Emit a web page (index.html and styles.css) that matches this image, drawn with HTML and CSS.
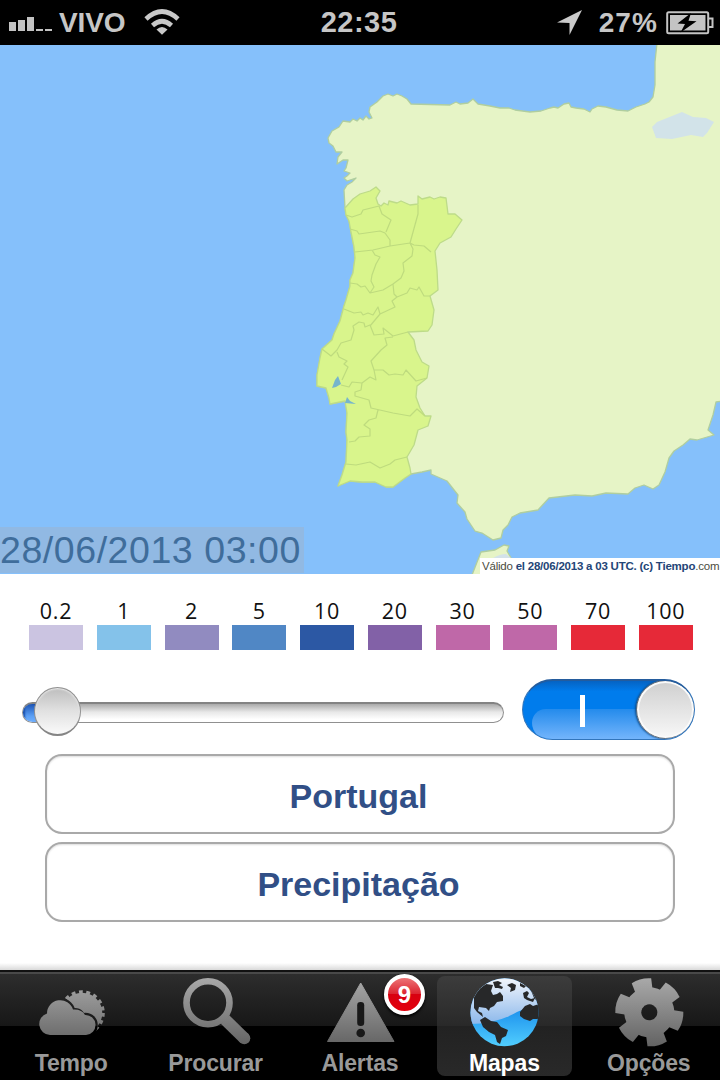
FILE: index.html
```html
<!DOCTYPE html>
<html lang="pt">
<head>
<meta charset="utf-8">
<title>Mapas</title>
<link rel="stylesheet" href="styles.css">
</head>
<body>
<div class="screen">
  <header class="status">
    <div class="status-left">
      <svg class="signal" width="45" height="16" viewBox="0 0 45 16"><path d="M0 6h7v9H0zM9 4h7v11H9zM18 1h7v14h-7zM27 13h7v2h-7zM36 13h7v2h-7z" fill="#c3c3c3"/></svg>
      <span class="carrier">VIVO</span>
      <svg class="wifi" width="36" height="28" viewBox="0 0 36 28" fill="none" stroke="#c9c9c9" stroke-width="4.6"><path d="M2 11Q18-4 34 11"/><path d="M8.500 17.500Q18 9 27.500 17.500"/><path d="M12.500 21.500Q18 16.500 23.500 21.500L18 26.800Z" fill="#c9c9c9" stroke="none"/></svg>
    </div>
    <div class="clock">22:35</div>
    <div class="status-right">
      <svg class="arrow" width="27" height="27" viewBox="0 0 27 27"><path d="M26 1L13.500 26V14L1 13.500Z" fill="#cacaca"/></svg>
      <span class="percent">27%</span>
      <svg class="battery" width="48" height="24" viewBox="0 0 48 24"><rect x="1.200" y="1.200" width="41" height="21" rx="1.500" fill="none" stroke="#c4c4c4" stroke-width="2"/><path d="M42.500 7.500h4v8.500h-4" fill="none" stroke="#c4c4c4" stroke-width="2"/><path d="M4 4h35.500v15.500H4z" fill="#c4c4c4"/><path d="M25 2L11.500 12.500L19 13L14.500 21.500L30.500 10.300L22.500 9.700Z" fill="#000"/></svg>
    </div>
  </header>

  <section class="map">
    <svg class="map-art" width="720" height="529" viewBox="0 45 720 529">
      <rect y="45" width="720" height="529" fill="#85c0fb"/>
      <path class="land" d="M657 43L655 62L655 85L653 97L649 102L645 104L636 107L628 111L617 110L606 107L598 106L592 109L590 112L584 109L576 108L571 107L569 103L564 104L558 108L554 107L550 108L541 111L530 112L515 110L509 108L500 108L490 106L478 104L473 99L468 103L460 104L456 102L450 105L411 104L407 99L402 96L397 94L393 96L388 94L383 96L377 102L370 107L369 112L372 118L369 119L366 116L363 120L360 118L357 121L353 119L350 122L343 121L339 127L332 131L328 138L329 143L333 146L336 152L342 152L338 157L337 164L343 160L348 160L346 168L344 171L350 173L347 176L344 178L347 181L356 178L352 182L347 185L344 190L345 208L346 215L349 221L351 232L354 247L355 258L353 273L350 280L350 286L346 300L344 306L340 321L334 334L332 340L322 349L320 358L317 375L317 386L326 388L329 398L330 404L345 401L347 413L346 432L347 440L346 462L342 475L338 486L350 481L362 482L375 482L386 487L393 487L405 478L411 474L422 472L431 470L431 474L447 481L458 495L457 503L465 512L467 519L475 531L482 533L493 540L501 538L503 530L508 525L512 517L520 513L538 510L549 498L575 495L592 496L606 493L628 494L635 488L644 485L653 489L659 485L665 472L669 458L674 451L683 445L690 439L697 440L714 435L708 430L713 415L716 402L722 401V43Z"/>
      <path class="land" d="M472 575L481 552L495 550L504 545L509 546L507 551L511 558V575Z"/>
      <path d="M493 558Q500 554 506 554L511 558Z" fill="#d3e2e9"/>
      <path d="M652 127L657 122L672 116L682 112L693 117L706 118L714 122L707 133L703 137L691 135L672 139L656 138Z" fill="#d2e3e9"/>
      <path class="portugal" d="M345 208L353 199L360 194L370 191L376 187L380 191L376 198L378 204L381 206L384 203L388 205L389 201L397 203L401 201L410 205L418 204L418 196L422 199L430 197L434 199L440 197L446 198L448 214L455 214L462 220L456 229L451 237L440 243L435 251L437 270L438 290L430 296L434 310L432 325L428 331L408 332L414 340L416 350L422 362L429 366L427 378L417 386L416 397L420 408L425 416L431 416L428 426L418 430L414 445L407 457L410 468L411 474L405 478L393 487L386 487L375 482L362 482L350 481L338 486L342 475L346 462L347 440L346 432L347 413L345 401L330 404L329 398L326 388L317 386L317 375L320 358L322 349L332 340L334 334L340 321L344 306L346 300L350 286L350 280L353 273L355 258L354 247L351 232L349 221L346 215Z"/>
      <path class="district" d="M346 215L352 217L361 214L363 210L379 206L382 214L391 220L386 232M350 229L357 231L359 234L380 231L385 233L390 240L390 246M355 252L373 250L390 246L410 243L414 245L424 246L431 252M418 205L418 214L410 243M372 250L375 255L380 257L376 264L372 275L371 281L374 287L370 293M410 243L413 249L412 256L403 263L404 271L401 278L393 284M350 283L357 284L361 287L365 286L370 293L383 290L393 284L394 294L397 297L407 293L410 288L417 290L419 287L424 296L430 296M397 297L392 301L395 307L380 314L370 326M344 309L354 313L361 312L363 315L368 313L373 315L378 307L380 314M322 349L331 356L337 350L341 343L351 340L354 330L353 326L359 322L364 323L365 327L370 325L374 335L384 334L383 328L393 336L408 332M337 352L339 357L347 361L344 364L348 367L342 380M393 337L385 338L387 345L381 350L371 361L374 370L383 370L389 375L395 374L403 375L406 370L416 381L427 378M374 370L376 380L370 377L362 383L352 382L349 387L341 385M362 383L361 390L355 392L355 396L369 400L371 408L393 413L410 416L417 409L425 416M378 410L376 418L369 420L364 425L370 429L370 436L359 437L355 441L349 442M346 464L356 465L370 462L380 468L390 464L395 460L407 457"/>
      <path d="M332 388L335 380L338 376L341 384L336 387ZM347 397L350 401L356 404L345 403Z" fill="#76b5cc"/>
    </svg>
    <div class="map-date">28/06/2013 03:00</div>
    <div class="credit">Válido <b>el 28/06/2013 a 03 UTC. (c) Tiempo</b>.com</div>
  </section>

  <section class="legend">
    <div class="step s1">0.2</div><div class="step s2">1</div><div class="step s3">2</div><div class="step s4">5</div><div class="step s5">10</div><div class="step s6">20</div><div class="step s7">30</div><div class="step s7">50</div><div class="step s8">70</div><div class="step s8">100</div>
  </section>

  <section class="controls">
    <div class="slider"><div class="track"><div class="filled"></div></div><div class="knob"></div></div>
    <div class="toggle"><div class="gloss"></div><div class="on-mark"></div><div class="thumb"></div></div>
  </section>

  <section class="choices">
    <button class="choice">Portugal</button>
    <button class="choice">Precipitação</button>
  </section>

  <nav class="tabs">
    <div class="tab">
      <svg width="70" height="70" viewBox="0 0 70 70">
        <defs>
          <linearGradient id="gray" gradientUnits="userSpaceOnUse" x1="0" y1="0" x2="0" y2="70"><stop offset="0" stop-color="#aaa"/><stop offset="1" stop-color="#626262"/></linearGradient>
          <mask id="behind"><rect width="70" height="70" fill="#fff"/><g fill="#000" stroke="#000" stroke-width="4"><circle cx="24.500" cy="36" r="13"/><circle cx="39" cy="42" r="9"/><circle cx="49.500" cy="48" r="10.300"/><path d="M13 47H52V70H13Z"/></g></mask>
        </defs>
        <g mask="url(#behind)"><circle cx="46" cy="36" r="20.300" fill="url(#gray)"/><circle cx="46" cy="36" r="21" fill="none" stroke="url(#gray)" stroke-width="3.600" stroke-dasharray="3.800 3.530"/></g>
        <path fill="url(#gray)" d="M14 58A11 11 0 0 1 11 36.500A13.300 13.300 0 0 1 37 32.500Q46 32 49 38A10 10 0 0 1 50 58Z"/>
      </svg><span>Tempo</span>
    </div>
    <div class="tab">
      <svg width="70" height="70" viewBox="0 0 70 70"><circle cx="27" cy="25.700" r="21.500" fill="none" stroke="url(#gray)" stroke-width="6.600"/><path d="M44 42.500L63.500 61.500" stroke="url(#gray)" stroke-width="12"/><circle cx="63.300" cy="61.300" r="6" fill="url(#gray)"/></svg><span>Procurar</span>
    </div>
    <div class="tab">
      <svg width="70" height="70" viewBox="0 0 70 70"><path d="M35.700 6L69 64.500H2.500Z" fill="url(#gray)" stroke="url(#gray)" stroke-linejoin="round"/><rect x="32.200" y="25" width="7" height="24" rx="3.300" fill="#181818"/><circle cx="35.700" cy="56" r="4.300" fill="#181818"/></svg><span>Alertas</span>
      <div class="badge">9</div>
    </div>
    <div class="tab selected">
      <svg width="70" height="70" viewBox="0 0 70 70">
        <defs><linearGradient id="sea" x1="0" y1="0" x2="0" y2="1"><stop offset="0" stop-color="#1688e5"/><stop offset=".5" stop-color="#2196ee"/><stop offset="1" stop-color="#52cfff"/></linearGradient><linearGradient id="shine" x1="0" y1="0" x2="0" y2="1"><stop offset="0" stop-color="#f4f7fc"/><stop offset="1" stop-color="#8cb8eb"/></linearGradient><clipPath id="globe"><circle cx="35.500" cy="35.300" r="34"/></clipPath></defs>
        <g clip-path="url(#globe)"><rect width="70" height="70" fill="url(#sea)"/><path d="M0 0H70V28Q57 31 48 35Q28 47 0 47Z" fill="url(#shine)"/>
        <g fill="#272829"><path d="M5 19L10 12L17 7L24 8L22 14L24 18L28 17L31 15L34 19L34 24L28 25L25 29L21 31L20 34L17 31L10 30L9 34L13 36L14 40L8 35L5 31Z"/><path d="M24 5L29 4L33 6L30 8L34 10L33 12L29 11L26 11ZM38 8L43 6L47 8L46 13L41 15L42 11ZM51 6L57 9L55 11L51 9ZM54 16L58 14L60 16L58 20L62 22L66 21L64 25L58 23L55 21ZM61 11L67 17L69 25L65 21Z"/><path d="M11 43L16 40L22 44L28 45L32 50L39 53L37 59L33 61L31 67L28 65L26 58L20 55L14 50Z"/><path d="M51 35L56 29L61 27L64 29L70 27L70 42L64 42L61 44L55 42L51 39Z"/></g></g>
      </svg><span>Mapas</span>
    </div>
    <div class="tab">
      <svg width="70" height="70" viewBox="0 0 70 70">
        <defs><mask id="cog"><g transform="translate(35.300 35.300) rotate(-14)"><circle r="25" fill="#fff"/><g fill="#fff"><path id="tooth" d="M-8.500 -20L-10 -32.500Q0 -35.800 10 -32.500L8.500 -20Z"/><use href="#tooth" transform="rotate(60)"/><use href="#tooth" transform="rotate(120)"/><use href="#tooth" transform="rotate(180)"/><use href="#tooth" transform="rotate(240)"/><use href="#tooth" transform="rotate(300)"/></g><circle r="8" fill="#000"/></g></mask></defs>
        <rect width="70" height="70" fill="url(#gray)" mask="url(#cog)"/>
      </svg><span>Opções</span>
    </div>
  </nav>
</div>
</body>
</html>
```

FILE: styles.css
```css
* { box-sizing: border-box; }
body { margin: 0; font-family: "Liberation Sans", Arial, sans-serif; background: #fff; }
.screen { width: 720px; height: 1080px; display: flex; flex-direction: column; overflow: hidden; }
svg { display: block; flex: none; }

.status { height: 45px; background: #000; color: #c6c6c6; display: grid; grid-template-columns: 1fr 90px 1fr; align-items: center; font-size: 28px; font-weight: bold; line-height: 45px; }
.status-left { display: flex; align-items: center; padding-left: 9px; }
.signal { margin-top: 2px; }
.carrier { width: 67px; margin-left: 5px; letter-spacing: -0.1px; }
.wifi { margin: 0 0 1px 18px; }
.clock { text-align: center; font-size: 29px; letter-spacing: 0.5px; margin-left: -2px; }
.status-right { display: flex; align-items: center; justify-content: flex-end; padding-right: 6px; }
.percent { margin: 0 8px 0 16px; letter-spacing: 1.1px; }

.map { position: relative; height: 529px; }
.map-date { position: absolute; left: 0; bottom: 1px; width: 304px; height: 46px; background: #91b9e3; color: #3f6d9b; font-size: 37.5px; line-height: 46px; white-space: nowrap; letter-spacing: 0.56px; }
.credit { position: absolute; right: 0; bottom: 0; width: 240px; height: 16px; padding-left: 2px; background: #fff; color: #4b4c3e; font-size: 11.5px; line-height: 17px; white-space: nowrap; letter-spacing: -0.22px; }
.credit b { color: #244577; }
.land { fill: #e6f4c6; stroke: #b0ce9f; stroke-width: 1.3; stroke-linejoin: round; }
.portugal { fill: #d9f58c; stroke: #bddb89; stroke-width: 1.3; stroke-linejoin: round; }
.district { fill: none; stroke: #bedb7e; stroke-width: 1.2; stroke-linejoin: round; }

.legend { height: 77px; padding: 24px 27px 0 29px; display: flex; gap: 13.75px; }
.step { width: 54px; height: 52px; text-align: center; font: 21.5px/25px "Open Sans", "Noto Sans", sans-serif; letter-spacing: 0.7px; color: #111; }
.step::after { content: ""; display: block; height: 25px; margin-top: 2px; background: var(--shade); }
.s1 { --shade: #cbc4e1; }
.s2 { --shade: #84c2ea; }
.s3 { --shade: #918bc0; }
.s4 { --shade: #5087c5; }
.s5 { --shade: #2c58a4; }
.s6 { --shade: #8261a7; }
.s7 { --shade: #bf68a8; }
.s8 { --shade: #e62938; }

.controls { height: 103px; padding: 28px 25px 0 22px; display: flex; justify-content: space-between; }
.slider { position: relative; width: 482px; height: 62px; padding-top: 23px; }
.track { height: 21px; border: 1px solid #909090; border-top: 2px solid #838383; border-radius: 11px; background: linear-gradient(#aaa, #e8e8e8 45%, #fff 85%); overflow: hidden; }
.filled { width: 30px; height: 20px; background: linear-gradient(#1d55b5, #5b9ff5 60%, #76b3ff); box-shadow: inset 2px 0 2px #164caa; }
.knob { position: absolute; left: 12px; top: 8px; width: 47px; height: 49px; border-radius: 50%; border: 1px solid #929292; border-bottom: 2px solid #858585; background: linear-gradient(#bdbdbd, #e1e1e1 50%, #fafafa); box-shadow: inset 0 1px 2px #eee; }
.toggle { position: relative; width: 173px; height: 61px; border-radius: 31px; background: linear-gradient(#0563c3, #007cec 18%); overflow: hidden; border: 1px solid #3275bb; border-top: 2px solid #245c9d; }
.gloss { position: absolute; left: 9px; right: 0; top: 28px; height: 31px; border-radius: 16px 0 0 20px; background: linear-gradient(#248bec, #76b6fc); }
.on-mark { position: absolute; left: 57px; top: 14px; width: 5px; height: 32px; background: #fff; }
.thumb { position: absolute; right: -1px; top: -1px; width: 59px; height: 59px; border-radius: 50%; border: 1.5px solid #626a73; background: linear-gradient(#cfcfcf, #f8f8f8); box-shadow: inset 0 0 0 2px #fafafa, -1px 0 2px #0e4b88; }

.choices { height: 216px; padding: 0 45px; display: flex; flex-direction: column; gap: 8px; background: linear-gradient(#fff, #fff 209px, #d9d9d9 216px); }
.choice { height: 80px; border: 2px solid #a9a9a9; border-radius: 17px; padding: 4px 3px 0 0; background: #fff; box-shadow: inset 0 1px 2px #ddd; font: bold 34px "Liberation Sans", Arial, sans-serif; letter-spacing: 0; color: #314f86; }

.tabs { height: 110px; display: grid; grid-template-columns: repeat(5, 144.4px); margin-left: -1px; background: linear-gradient(#111 0 2px, #494949 2px 4px, #2d2d2d 4px, #171717 56px, #000 56px); }
.tab { position: relative; height: 100px; margin: 6px 5px 0; padding-top: 1px; border-radius: 8px; display: flex; flex-direction: column; align-items: center; color: #999; font-size: 23px; font-weight: bold; line-height: 28px; letter-spacing: -0.15px; }
.tab span { margin-top: 2px; }
.tab.selected { background: linear-gradient(#3c3c3c, #292929 50px, #222 50px, #292929); color: #fff; }
.badge { position: absolute; left: 91px; top: -2px; width: 41px; height: 41px; border: 4px solid #fff; border-radius: 50%; background: linear-gradient(#ed7476, #dc2430 48%, #d80010 50%, #e3000c); box-shadow: 0 2px 3px #000; color: #fff; font-size: 24px; line-height: 33px; text-align: center; }
```
